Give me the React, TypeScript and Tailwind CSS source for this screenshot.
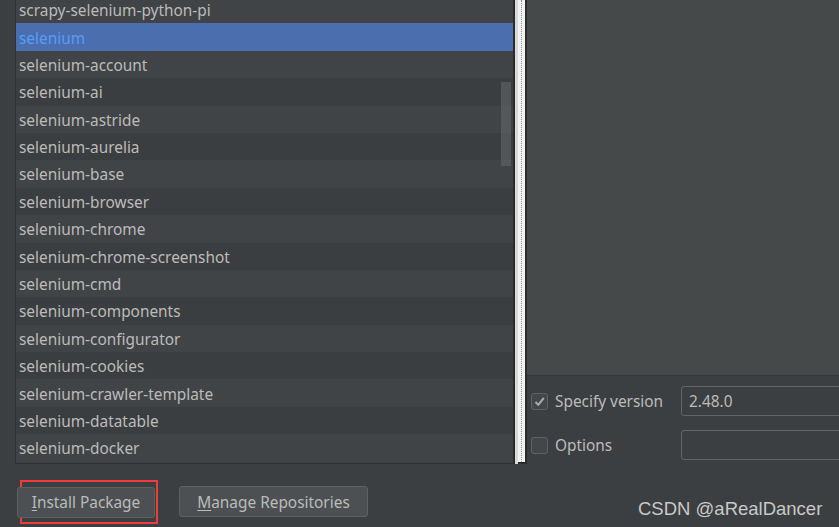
import React from 'react';

const packages = [
  'scrapy-selenium-python-pi',
  'selenium',
  'selenium-account',
  'selenium-ai',
  'selenium-astride',
  'selenium-aurelia',
  'selenium-base',
  'selenium-browser',
  'selenium-chrome',
  'selenium-chrome-screenshot',
  'selenium-cmd',
  'selenium-components',
  'selenium-configurator',
  'selenium-cookies',
  'selenium-crawler-template',
  'selenium-datatable',
  'selenium-docker',
];

const font = { fontFamily: '"Noto Sans", "Noto Sans CJK SC", sans-serif' };

const Checkbox: React.FC<{ checked?: boolean }> = ({ checked }) => (
  <div className="w-[17px] h-[17px] rounded-[3px] border border-[#5f6264] bg-[#43474a] flex items-center justify-center">
    {checked && (
      <svg width="13" height="13" viewBox="0 0 13 13">
        <path d="M2.5 7 L5.3 9.8 L10.8 3" fill="none" stroke="#a9a9a9" strokeWidth="2" />
      </svg>
    )}
  </div>
);

export default function App() {
  const selected = 'selenium';

  return (
    <div className="w-[839px] h-[527px] bg-[#3c3f41] overflow-hidden flex flex-col" style={font}>
      <div className="flex h-[464px]">
        <div className="w-[15px] shrink-0" />

        {/* список пакетов */}
        <div className="w-[498px] shrink-0 relative overflow-hidden border-l border-b border-[#2f3133]">
          <div className="-mt-[4px]">
            {packages.map((name, i) => {
              const isSel = name === selected;
              const bg = isSel ? 'bg-[#4b6eaf]' : i % 2 === 0 ? 'bg-[#414446]' : 'bg-[#3b3e40]';
              return (
                <div
                  key={name}
                  className={`h-[27.4px] flex items-center pl-[3px] pt-[2px] text-[15.4px] ${bg} ${isSel ? 'text-[#589df6]' : 'text-[#bbbbbb]'}`}
                >
                  {name}
                </div>
              );
            })}
          </div>
          {/* ползунок прокрутки */}
          <div className="absolute right-[2px] top-[82px] w-[10px] h-[84px] bg-[#5a5d5f]/80" />
        </div>

        {/* разделитель */}
        <div className="w-[14px] shrink-0 flex">
          <div className="w-[2px] bg-[#2b2b2b]" />
          <div className="w-[3px] bg-[#d8d8d8]" />
          <div className="flex-1 bg-[#f2f2f2] flex justify-center border-b-2 border-[#2b2b2b]">
            <div className="h-full border-l border-dotted border-[#7d8fa8]" />
          </div>
          <div className="w-[2px] bg-[#2b2b2b]" />
        </div>

        {/* правая панель */}
        <div className="flex-1 flex flex-col">
          <div className="h-[376px] bg-[#45494a] border-b border-[#333638]" />
          <div className="flex flex-col pl-[4px] pt-[10px] gap-[14px]">
            <div className="flex items-center h-[30px]">
              <Checkbox checked />
              <span className="ml-[7px] pt-[2px] text-[15.4px] text-[#bbbbbb] w-[126px]">Specify version</span>
              <div className="flex-1 h-[30px] -mr-[4px] border border-[#646464] rounded-[3px] flex items-center pl-[7px] pt-[1px] text-[15.4px] text-[#bbbbbb]">
                2.48.0
              </div>
            </div>
            <div className="flex items-center h-[30px]">
              <Checkbox />
              <span className="ml-[7px] pt-[2px] text-[15.4px] text-[#bbbbbb] w-[126px]">Options</span>
              <div className="flex-1 h-[30px] -mr-[4px] border border-[#646464] rounded-[3px]" />
            </div>
          </div>
        </div>
      </div>

      {/* нижняя строка кнопок */}
      <div className="flex items-start pt-[16px] pl-[20px] relative">
        <div className="border-2 border-[#f23b3b] w-[138px] h-[44px] flex items-center">
          <button className="-ml-[5px] w-[138px] h-[31px] pt-[2px] bg-[#4c5052] border border-[#5e6062] rounded-[3px] text-[15.4px] text-[#bbbbbb] flex items-center justify-center">
            <span><span className="underline underline-offset-2">I</span>nstall Package</span>
          </button>
        </div>
        <button className="ml-[21px] mt-[6px] w-[189px] h-[31px] pt-[2px] bg-[#4c5052] border border-[#5e6062] rounded-[3px] text-[15.4px] text-[#bbbbbb] flex items-center justify-center">
          <span><span className="underline underline-offset-2">M</span>anage Repositories</span>
        </button>
        <div
          className="absolute left-[638px] top-[31px] text-[18.5px] text-[#c8c8c8]"
          style={{ fontFamily: '"Liberation Sans", Arial, sans-serif' }}
        >
          CSDN @aRealDancer
        </div>
      </div>
    </div>
  );
}
